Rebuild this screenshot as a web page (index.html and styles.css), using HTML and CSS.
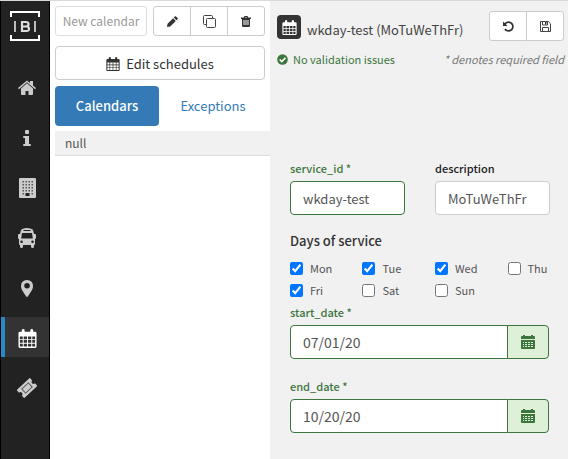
FILE: index.html
```html
<!DOCTYPE html>
<html lang="en">
<head>
<meta charset="utf-8">
<title>Calendars</title>
<link rel="stylesheet" href="styles.css">
</head>
<body>
<svg class="defs" aria-hidden="true">
  <symbol id="calendar" viewBox="0 0 20 20">
    <path fill-rule="evenodd" d="M2 3h2V1.500Q4 0 5.500 0T7 1.500V3h6V1.500Q13 0 14.500 0T16 1.500V3h2q1.500 0 1.500 1.500v14Q19.500 20 18 20H2Q.5 20 .5 18.500v-14Q.5 3 2 3ZM2 8v2.700h3V8Zm4 0v2.700h3.500V8Zm4.500 0v2.700H14V8ZM15 8v2.700h3V8ZM2 11.700v2.800h3v-2.800Zm4 0v2.800h3.500v-2.800Zm4.500 0v2.800H14v-2.800Zm4.500 0v2.800h3v-2.800ZM2 15.500v3h3v-3Zm4 0v3h3.500v-3Zm4.500 0v3H14v-3Zm4.500 0v3h3v-3Z"/>
  </symbol>
  <symbol id="datepick" viewBox="0 0 14 14">
    <path fill-rule="evenodd" d="M1 1h1V0h2v1h6V0h2v1h1q1 0 1 1v2H0V2q0-1 1-1ZM0 5h14v8q0 1-1 1H1q-1 0-1-1ZM2 7v1h1V7Zm2 0v1h2V7Zm3 0v1h2V7Zm3 0v1h2V7ZM2 9v1h1V9Zm2 0v1h2V9Zm3 0v1h2V9Zm3 0v1h2V9Zm-8 2v1h1v-1Zm2 0v1h2v-1Zm3 0v1h2v-1Zm3 0v1h2v-1Z"/>
  </symbol>
</svg>
<div class="app">
  <nav class="sidebar" aria-label="Main">
    <a class="logo" href="#" aria-label="IBI">
      <svg viewBox="0 0 30 30" width="30" height="30"><path d="M1 6V1h28v5M1 24v5h28v-5" fill="none" stroke="#fff" stroke-width="2"/><path d="M5 10v11M25 10v11" stroke="#bbb" stroke-width="2"/><path fill="none" stroke="#ddd" stroke-width="2.200" d="M12 11h4q2.500 0 2.500 2.200T16 15.500h-4 4.500q2.500 0 2.500 2.300T16.500 20H12Z"/></svg>
    </a>
    <a class="item" href="#" aria-label="Home"><svg viewBox="0 0 18 16" width="18" height="16"><path d="M9 3.300 15 8.600V14q0 1-1 1h-3.500v-4h-3v4H4q-1 0-1-1V8.600Z"/><path d="M9 .5 12 3V1h3v4.500l3 2.600-1 1.100L9 2.300 1 9.200 0 8.100Z"/></svg></a>
    <a class="item" href="#" aria-label="Info"><svg viewBox="0 0 8 16" width="8" height="16"><path d="M2 1q0-1 1-1h2q1 0 1 1v2q0 1-1 1H3Q2 4 2 3ZM1 6h5v8h1q1 0 1 1t-1 1H1q-1 0-1-1t1-1h1V8H1Q0 8 0 7t1-1Z"/></svg></a>
    <a class="item" href="#" aria-label="Building"><svg viewBox="0 0 17 20" width="17" height="20"><path d="M1 0h15q1 0 1 1v18q0 1-1 1H1q-1 0-1-1V1q0-1 1-1Z"/><path stroke="#555" stroke-width="1.500" stroke-dasharray="1.500 1.500" d="M3.500 3.700h10.500M3.500 6.700h10.500M3.500 9.700h10.500M3.500 12.700h10.500M3.500 15.700h2M12.500 15.700h2"/><path fill="#222" d="M6.500 15h4v3h-4Z"/></svg></a>
    <a class="item" href="#" aria-label="Bus"><svg viewBox="0 0 18 20" width="18" height="20"><path fill-rule="evenodd" d="M5 .7Q9-.5 13 .7q2 .5 2.300 2.300L16 6h1q1 0 1 1v3q0 1-1 1v5q0 1-1 1v1.500q0 1.500-1.500 1.500T13 18.500V17H5v1.500Q5 20 3.500 20T2 18.500V17q-1 0-1-1v-5q-1 0-1-1V7q0-1 1-1h1l.7-3Q3 1.200 5 .7ZM5.500 2v1h7V2ZM4 5l-.8 5.500h11.600L14 5Zm-.5 7.500a1.300 1.300 0 1 0 .1 2.600 1.300 1.300 0 0 0-.1-2.600Zm11 0a1.300 1.300 0 1 0 .1 2.600 1.300 1.300 0 0 0-.1-2.600Z"/></svg></a>
    <a class="item" href="#" aria-label="Stops"><svg viewBox="0 0 12 17" width="12" height="17"><path fill-rule="evenodd" d="M6 0q6 .3 6 6 0 2-1 4l-4 6.300q-1 1.400-2 0L1 10Q0 8 0 6 0 .3 6 0Zm0 3a2.800 2.800 0 1 0 .1 5.600A2.800 2.800 0 0 0 6 3Z"/></svg></a>
    <a class="item active" href="#" aria-label="Calendars"><svg width="19" height="19"><use href="#calendar"/></svg></a>
    <a class="item" href="#" aria-label="Fares"><svg viewBox="0 0 20 20" width="20" height="20"><g transform="rotate(-43 10 10)"><path d="M1 4.500h18v3.500q-2 0-2 2t2 2v3.500H1v-3.500q2 0 2-2T1 8Z"/><path fill="#ccc" stroke="#555" d="M5.500 7.200h9v5.600h-9Z"/></g></svg></a>
  </nav>

  <section class="list">
    <div class="toolbar">
      <button class="btn small new" disabled>New calendar</button>
      <div class="group">
        <button class="btn small" aria-label="Edit"><svg viewBox="0 0 12 12" width="11" height="11"><path d="M8.500.5q.7-.7 1.400 0l1.600 1.600q.7.700 0 1.400L10.300 4.700 7.300 1.700ZM6.600 2.400l3 3L3.500 11.400 0 12l.6-3.500Z"/></svg></button>
        <button class="btn small" aria-label="Duplicate"><svg viewBox="0 0 13 13" width="13" height="13"><path fill="none" stroke="#444" d="M4.500 3.500h7q1 0 1 1v7q0 1-1 1h-7q-1 0-1-1v-7q0-1 1-1ZM9.500 3V1.500q0-1-1-1h-7q-1 0-1 1v7q0 1 1 1H3"/></svg></button>
        <button class="btn small" aria-label="Delete"><svg viewBox="0 0 10 11" width="10" height="11"><path fill-rule="evenodd" d="M3 1q0-1 1-1h2q1 0 1 1v.5h3V3H9v7q0 1-1 1H2q-1 0-1-1V3H0V1.500h3Zm1 0v.5h2V1ZM2.500 4v5h1V4Zm2 0v5h1V4Zm2 0v5h1V4Z"/></svg></button>
      </div>
    </div>
    <button class="btn wide"><svg width="14" height="14"><use href="#calendar"/></svg>Edit schedules</button>
    <div class="tabs">
      <a class="tab current" href="#">Calendars</a>
      <a class="tab" href="#">Exceptions</a>
    </div>
    <div class="row">null</div>
  </section>

  <main class="detail">
    <header class="head">
      <span class="badge"><svg width="15" height="15"><use href="#calendar"/></svg></span>
      <h1>wkday-test (MoTuWeThFr)</h1>
      <div class="group">
        <button class="btn small" aria-label="Undo"><svg viewBox="0 0 11 11" width="11" height="11"><path d="M0 .5 1.500 2Q3.300.2 5.500.2a5.300 5.300 0 1 1-4.300 8.500l1.400-1.200A3.500 3.500 0 1 0 2.900 3.300L4.500 5H0Z"/></svg></button>
        <button class="btn small" aria-label="Save"><svg viewBox="0 0 11 11" width="11" height="11"><path fill="none" stroke="#444" d="M.5.500h7.800l2.200 2.200v7.800H.5ZM2.500.500v3.500h5v-3.500M2.500 10.500v-4h6v4"/><path d="M5 1h1.500v2.500H5Z"/></svg></button>
      </div>
    </header>
    <div class="status">
      <span class="valid"><svg viewBox="0 0 11 11" width="11" height="11"><circle cx="5.500" cy="5.500" r="5.300"/><path d="m2.700 5.500 2.100 2.100 3.700-3.800" fill="none" stroke="#fff" stroke-width="1.600"/></svg>No validation issues</span>
      <em>* denotes required field</em>
    </div>
    <form class="form">
      <div class="pair">
        <div class="field ok"><label for="sid">service_id *</label><input class="text" id="sid" type="text" value="wkday-test"></div>
        <div class="field"><label for="desc">description</label><input class="text" id="desc" type="text" value="MoTuWeThFr"></div>
      </div>
      <fieldset>
        <legend>Days of service</legend>
        <div class="days">
          <label><input type="checkbox" checked>Mon</label>
          <label><input type="checkbox" checked>Tue</label>
          <label><input type="checkbox" checked>Wed</label>
          <label><input type="checkbox">Thu</label>
          <label><input type="checkbox" checked>Fri</label>
          <label><input type="checkbox">Sat</label>
          <label><input type="checkbox">Sun</label>
        </div>
      </fieldset>
      <div class="field ok date"><label for="start">start_date *</label>
        <div class="picker"><input class="text" id="start" type="text" value="07/01/20"><button type="button" aria-label="Pick start date"><svg width="14" height="14"><use href="#datepick"/></svg></button></div></div>
      <div class="field ok date"><label for="end">end_date *</label>
        <div class="picker"><input class="text" id="end" type="text" value="10/20/20"><button type="button" aria-label="Pick end date"><svg width="14" height="14"><use href="#datepick"/></svg></button></div></div>
    </form>
  </main>
</div>
</body>
</html>
```
FILE: styles.css
```css
* { box-sizing: border-box; }
body {
  margin: 0;
  color: #333;
  font: 13px/20px "Noto Sans CJK SC", "Noto Sans", sans-serif;
}
button, input { font: inherit; color: inherit; margin: 0; }
a { text-decoration: none; }
svg { fill: currentColor; flex: none; }
.defs { display: none; }

.app {
  display: flex;
  min-height: 100vh;
  border-top: 1px solid #d8d8de;
}

.sidebar {
  flex: none;
  display: flex;
  flex-direction: column;
  gap: 10px;
  width: 50px;
  padding-top: 10px;
  background: #222;
  border: solid #000;
  border-width: 0 1px;
  color: #ccc;
}
.logo {
  display: flex;
  justify-content: center;
  height: 46px;
}
.item {
  display: flex;
  align-items: center;
  justify-content: center;
  height: 40px;
  padding: 2px 0 0 4px;
  border-left: 0 solid #2889ca;
  color: inherit;
}
.item.active {
  padding-left: 0;
  border-left-width: 4px;
  background: #333;
  color: #fff;
}

.list {
  flex: none;
  width: 220px;
  padding: 5px 0 0 5px;
  background: #fff;
}
.toolbar {
  display: flex;
  justify-content: space-between;
  margin-right: 5px;
}
.btn {
  display: flex;
  align-items: center;
  justify-content: center;
  gap: 6px;
  height: 34px;
  padding: 0;
  background: #fff;
  border: 1px solid #ccc;
  border-radius: 4px;
}
.btn.small {
  height: 30px;
  font-size: 12px;
  border-radius: 3px;
}
.btn.new {
  width: 92px;
  color: #999;
  border-color: #ddd;
}
.btn.wide { width: calc(100% - 5px); margin-top: 10px; padding-top: 2px; }
.group { display: flex; }
.group .btn { width: 38px; }
.group .btn + .btn { margin-left: -1px; }
.group .btn:not(:last-child) { border-top-right-radius: 0; border-bottom-right-radius: 0; }
.group .btn:not(:first-child) { border-top-left-radius: 0; border-bottom-left-radius: 0; }

.tabs { display: flex; gap: 2px; margin: 6px 5px 5px 0; }
.tab {
  flex: 1;
  padding: 10px 0;
  border-radius: 4px;
  color: #337ab7;
  text-align: center;
}
.tab.current { background: #337ab7; color: #fff; font-weight: 500; }
.row {
  height: 25px;
  padding-left: 10px;
  background: #f1f1f1;
  border-bottom: 1px solid #ddd;
  color: #555;
  font-size: 12px;
  line-height: 24px;
}

.detail {
  flex: 1;
  min-width: 0;
  padding: 10px 4px 0 7px;
  background: #f1f1f1;
}
.head { display: flex; align-items: flex-start; }
.badge {
  display: flex;
  align-items: center;
  justify-content: center;
  width: 24px;
  height: 24px;
  margin-top: 4px;
  border-radius: 4px;
  background: #333;
  color: #fff;
}
h1 {
  flex: 1;
  margin: 9px 0 0 6px;
  font-size: 13px;
  font-weight: 400;
  line-height: 20px;
  white-space: nowrap;
  color: #444;
}
.status {
  display: flex;
  align-items: center;
  justify-content: space-between;
  margin-top: 8px;
  font-size: 11px;
  white-space: nowrap;
}
.valid { display: flex; align-items: center; gap: 5px; color: #3c763d; }
.status em { color: #777; }

.form { padding: 90px 14px 0 13px; }
.pair { display: grid; grid-template-columns: 1fr 1fr; gap: 30px; }
.field > label {
  display: block;
  margin-bottom: 4px;
  font-size: 11px;
  font-weight: 500;
  line-height: 18px;
  color: #222;
}
.field.ok > label { color: #3c763d; }
.text {
  width: 100%;
  height: 34px;
  padding: 0 12px;
  border: 1px solid #ccc;
  border-radius: 4px;
  background: #fff;
  color: #555;
}
.ok .text { border-color: #3c763d; }
fieldset { margin: 16px 0 0; padding: 0; border: 0; min-width: 0; }
legend { padding: 0; font-weight: 500; line-height: 20px; }
.days {
  display: grid;
  grid-template-columns: repeat(4, 1fr);
  gap: 4px 30px;
  margin-top: 8px;
}
.days label {
  display: flex;
  align-items: center;
  gap: 7px;
  height: 18px;
  font-size: 11px;
  color: #555;
}
.days input { flex: none; width: 13px; height: 13px; }
.date { margin-top: 4px; }
.date + .date { margin-top: 18px; }
.picker { display: flex; margin-right: 1px; }
.picker .text { flex: 1; min-width: 0; border-radius: 4px 0 0 4px; font-size: 14px; }
.picker button {
  display: flex;
  align-items: center;
  justify-content: center;
  width: 42px;
  padding: 0;
  margin-left: -1px;
  border: 1px solid #3c763d;
  border-radius: 0 4px 4px 0;
  background: #dff0d8;
  color: #3c763d;
}
```
